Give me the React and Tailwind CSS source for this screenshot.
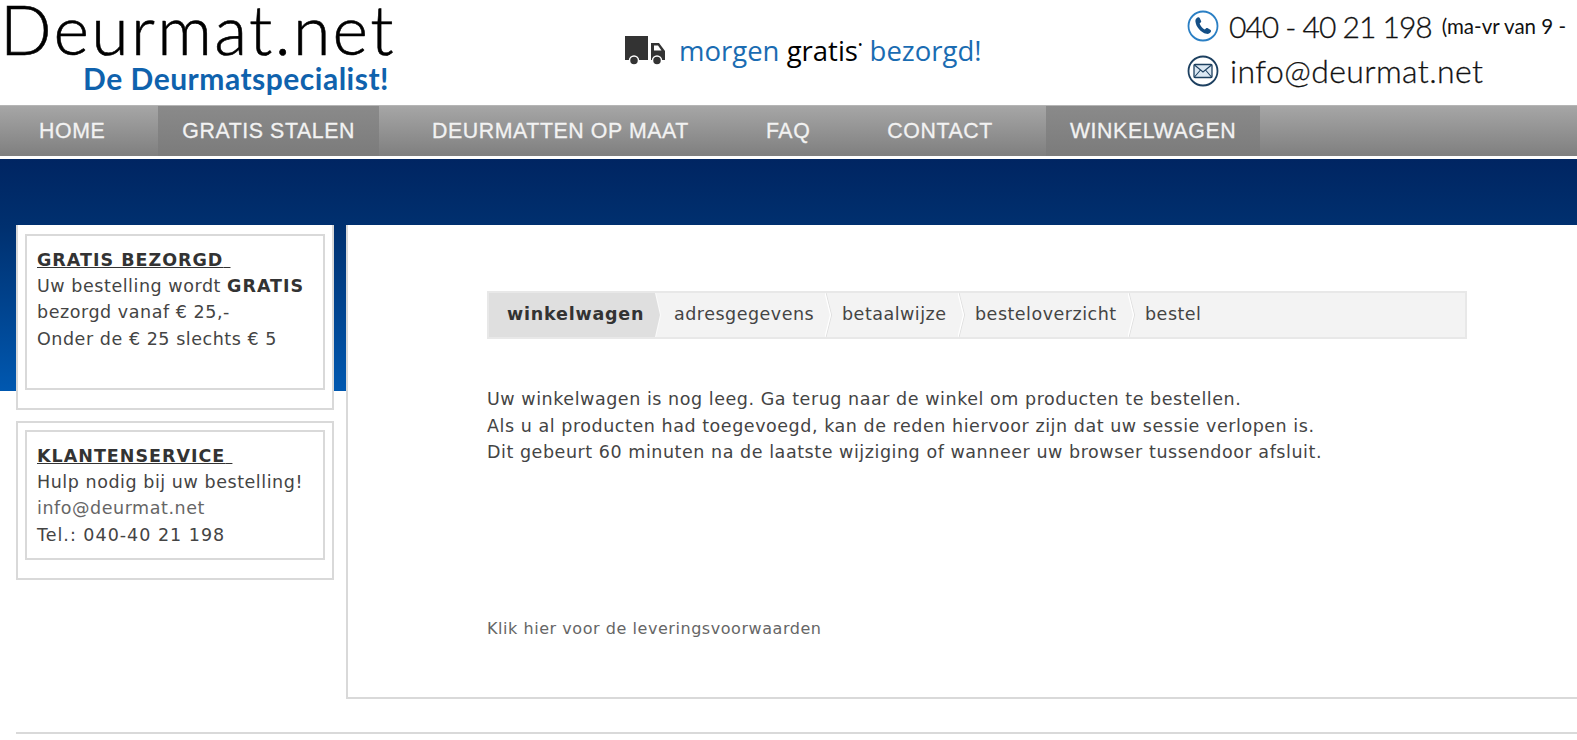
const navItems = [
  { label: 'HOME' },
  { label: 'GRATIS STALEN', active: true },
  { label: 'DEURMATTEN OP MAAT' },
  { label: 'FAQ' },
  { label: 'CONTACT' },
  { label: 'WINKELWAGEN', active: true },
];

const steps = [
  { label: 'betaalwijze', width: 'w-[133px]' },
  { label: 'besteloverzicht', width: 'w-[170px]' },
  { label: 'bestel', width: 'flex-1' },
];

const TruckIcon = () => (
  <svg width="42" height="30" viewBox="0 0 42 30" className="shrink-0">
    <path d="M1 0h23v24H1zM27 7h8l6 8v9H27z" fill="#333" />
    <path d="M30 9.500h4l3.500 5H30z" fill="#fff" />
    <circle cx="10" cy="24.500" r="4.500" fill="#333" stroke="#fff" strokeWidth="1.500" />
    <circle cx="33" cy="24.500" r="4.500" fill="#333" stroke="#fff" strokeWidth="1.500" />
  </svg>
);

const PhoneIcon = () => (
  <svg width="32" height="32" viewBox="0 0 32 32" className="shrink-0">
    <circle cx="16" cy="16" r="14.500" fill="#fff" stroke="#2a7fc4" strokeWidth="1.800" />
    <path d="M10.500 7.500c1-.6 1.700-.3 2.200.6l1.300 2.600c.4.800.2 1.400-.4 1.900l-1 .9c.8 2.500 2.800 4.800 5.200 6l1.100-1c.6-.5 1.200-.6 1.900-.2l2.500 1.500c.8.500 1 1.200.5 2-1 1.700-2.500 2.500-4.400 2-5.700-1.400-10.500-7-11-12.600-.1-1.500.7-2.800 2.100-3.700z" fill="#144f86" />
  </svg>
);

const MailIcon = () => (
  <svg width="32" height="32" viewBox="0 0 32 32" className="shrink-0">
    <circle cx="16" cy="16" r="14.500" fill="#fff" stroke="#1d4060" strokeWidth="1.800" />
    <rect x="7" y="9.500" width="18" height="13" rx="1" fill="#dbe8f3" stroke="#1d4060" strokeWidth="1.300" />
    <path d="M7.500 10l8.500 7 8.500-7M7.500 22l6-7M24.500 22l-6-7" fill="none" stroke="#1d4060" strokeWidth="1.100" />
  </svg>
);

const StepChevron = () => (
  <svg width="8" height="44" viewBox="0 0 8 44" className="shrink-0">
    <path d="M1 0l5.500 22L1 44" fill="none" stroke="#dedede" strokeWidth="1" />
    <path d="M0 0l5.500 22L0 44" fill="none" stroke="#fff" strokeWidth="1.200" />
  </svg>
);

const InfoBox = ({ title, outerClass, innerClass, children }) => (
  <div className={`border-x-2 border-b-2 border-[#d9d9d9] bg-white px-[7px] ${outerClass}`}>
    <div className={`border-2 border-[#d9d9d9] px-[10px] text-[17.500px] leading-[26.200px] tracking-[0.550px] text-[#444] ${innerClass}`}>
      <div className="font-bold tracking-[1px] text-[#333] underline">{title}&nbsp;</div>
      {children}
    </div>
  </div>
);

export default function App() {
  return (
    <div className="h-[740px] overflow-hidden bg-white font-['DejaVu_Sans',sans-serif]">
      {/* header */}
      <header className="flex h-[105px] overflow-hidden">
        <div className="flex w-[394px] shrink-0 flex-col items-end">
          <div className="w-full font-['Lato',sans-serif] text-[68px] leading-[58px] font-light tracking-[2.300px] text-black [-webkit-text-stroke:0.6px_black]">
            Deurmat.net
          </div>
          <div className="mt-[3px] mr-[5px] font-['Lato',sans-serif] text-[30px] leading-[34px] font-bold tracking-[0.500px] text-[#0f62ad]">
            De Deurmatspecialist!
          </div>
        </div>
        <div className="ml-[230px] flex w-[370px] shrink-0 items-center gap-[13px] pb-[3px]">
          <TruckIcon />
          <div className="font-['Open_Sans',sans-serif] text-[27.500px] whitespace-nowrap text-[#1a6cb2]">
            morgen <span className="text-black">gratis</span>
            <span className="align-[12px] text-[12px] text-black">•</span> bezorgd!
          </div>
        </div>
        <div className="ml-[193px] flex flex-col gap-[13px] pt-[10px]">
          <div className="flex h-[32px] items-center gap-[10px] whitespace-nowrap">
            <PhoneIcon />
            <span className="font-['Lato',sans-serif] text-[30px] leading-[32px] font-light tracking-[-1px] text-[#111] [-webkit-text-stroke:0.3px_#111]">
              040 - 40 21 198
            </span>
            <span className="font-['Lato',sans-serif] text-[20.500px] text-[#111]">(ma-vr van 9 -</span>
          </div>
          <div className="flex h-[32px] items-center gap-[11px] whitespace-nowrap">
            <MailIcon />
            <span className="font-['Lato',sans-serif] text-[32px] leading-[32px] font-light tracking-[0.400px] text-[#111] [-webkit-text-stroke:0.3px_#111]">
              info@deurmat.net
            </span>
          </div>
        </div>
      </header>

      {/* menu */}
      <nav className="flex h-[51px] gap-[29px] border-t border-[#b5b5b5] bg-[linear-gradient(#a6a6a6,#7f7f7f)] pl-[15px] font-['Liberation_Sans',sans-serif]">
        {navItems.map((item) => (
          <div
            key={item.label}
            className={`flex items-center px-6 pt-[2px] text-[21.300px] tracking-[0.600px] whitespace-nowrap text-[#f2f2f2] [-webkit-text-stroke:0.3px_#f2f2f2] ${item.active ? 'bg-[linear-gradient(#8a8a8a,#7b7b7b)]' : ''}`}
          >
            {item.label}
          </div>
        ))}
      </nav>

      {/* body with the blue band behind it */}
      <div className="mt-[3px] flex bg-[linear-gradient(#002562,#00306f_29%,#0058b0)] bg-[length:100%_232px] bg-no-repeat pt-[66px]">
        <aside className="flex w-[346px] shrink-0 flex-col gap-[11px] pr-3 pl-4">
          <InfoBox title="GRATIS BEZORGD" outerClass="pt-[9px] pb-[18px]" innerClass="h-[156px] pt-[11px]">
            <div>Uw bestelling wordt <b className="tracking-[1px] text-[#333]">GRATIS</b></div>
            <div>bezorgd vanaf € 25,-</div>
            <div>Onder de € 25 slechts € 5</div>
          </InfoBox>
          <InfoBox title="KLANTENSERVICE" outerClass="border-t-2 pt-[7px] pb-[18px]" innerClass="h-[130px] pt-[11px]">
            <div>Hulp nodig bij uw bestelling!</div>
            <div className="text-[#666]">info@deurmat.net</div>
            <div className="tracking-[1px]">Tel.: 040-40 21 198</div>
          </InfoBox>
        </aside>

        <main className="h-[474px] min-w-0 flex-1 border-b-2 border-l-2 border-[#d9d9d9] bg-white pt-[66px] pl-[139px] text-[#444]">
          <div className="flex h-[48px] w-[980px] items-center border-2 border-[#e8e8e8] bg-[#f3f3f3] text-[17.500px] tracking-[0.500px]">
            <div className="h-full w-[172px] shrink-0 bg-[#fbfbfb] [clip-path:polygon(0_0,167px_0,172px_50%,167px_100%,0_100%)]">
              <div className="flex h-full w-[171px] items-center bg-[#dfdfdf] pb-[2px] pl-[18px] font-bold tracking-[0.800px] text-[#333] [clip-path:polygon(0_0,166px_0,171px_50%,166px_100%,0_100%)]">
                winkelwagen
              </div>
            </div>
            <div className="w-[164px] shrink-0 pb-[2px] pl-[13px]">adresgegevens</div>
            {steps.map((step) => (
              <div key={step.label} className={`flex h-full items-center ${step.width}`}>
                <StepChevron />
                <div className="pb-[2px] pl-[9px]">{step.label}</div>
              </div>
            ))}
          </div>
          <div className="mt-[47px] text-[17.500px] leading-[26.500px] tracking-[0.550px]">
            <div>Uw winkelwagen is nog leeg. Ga terug naar de winkel om producten te bestellen.</div>
            <div>Als u al producten had toegevoegd, kan de reden hiervoor zijn dat uw sessie verlopen is.</div>
            <div>Dit gebeurt 60 minuten na de laatste wijziging of wanneer uw browser tussendoor afsluit.</div>
          </div>
          <div className="mt-[151px] text-[16px] tracking-[0.550px] text-[#666]">Klik hier voor de leveringsvoorwaarden</div>
        </main>
      </div>

      <div className="mt-[33px] ml-4 border-t-2 border-[#d9d9d9]" />
    </div>
  );
}
